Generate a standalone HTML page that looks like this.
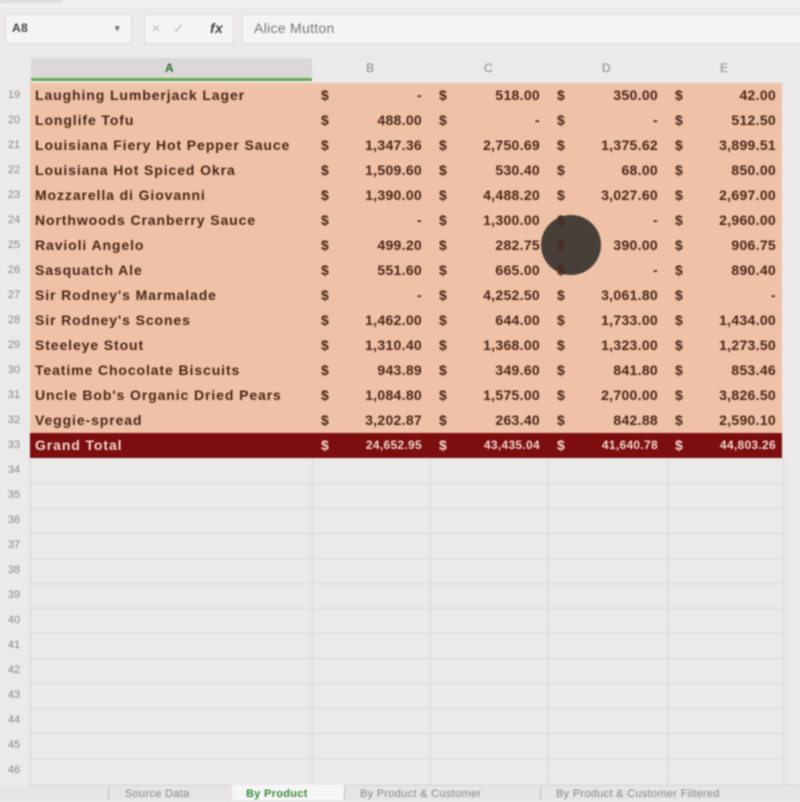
<!DOCTYPE html>
<html><head><meta charset="utf-8"><style>
body{margin:0;width:800px;height:800px;overflow:hidden;background:#ebe9ea;font-family:"Liberation Sans",sans-serif;position:relative}
.a{position:absolute}
.t{position:absolute;font-size:14px;font-weight:bold;color:#4a2616;white-space:nowrap;line-height:25px;letter-spacing:0.3px}
.w{color:#f3d8cc}
.rn{position:absolute;left:0;width:28px;text-align:center;font-size:11px;color:#8a8888;line-height:25px}
.v{text-align:right;width:100px}
#page{filter:blur(0.8px);position:absolute;inset:0}
</style></head><body><div id="page">
<div class="a" style="left:0;top:0;width:800px;height:8px;background:#f1f0f0"></div>
<div class="a" style="left:0;top:0;width:62px;height:3px;background:#dcdcdc"></div>
<div class="a" style="left:5px;top:14px;width:125px;height:28px;background:#f5f4f4;border:1px solid #dcdada"></div>
<div class="t" style="left:12px;top:15px;font-size:12px;color:#444;line-height:26px">A8</div>
<div class="t" style="left:115px;top:15px;font-size:9px;color:#666;line-height:26px">▾</div>
<div class="a" style="left:144px;top:14px;width:88px;height:28px;background:#f5f4f4;border:1px solid #dcdada"></div>
<div class="t" style="left:152px;top:15px;font-weight:normal;color:#bbb;line-height:26px">×&nbsp;&nbsp;&nbsp;✓</div>
<div class="t" style="left:210px;top:15px;font-style:italic;color:#444;line-height:26px">fx</div>
<div class="a" style="left:242px;top:14px;width:570px;height:28px;background:#f5f4f4;border:1px solid #dcdada"></div>
<div class="t" style="left:254px;top:15px;font-weight:normal;color:#777;font-size:14px;line-height:26px">Alice Mutton</div>
<div class="a" style="left:0;top:56px;width:800px;height:26px;background:#ebe9ea"></div>
<div class="a" style="left:31px;top:58px;width:281px;height:20px;background:#dad8d8"></div>
<div class="a" style="left:31px;top:78px;width:281px;height:3px;background:#6aa84f"></div>
<div class="t" style="left:165px;top:56px;color:#2f6b30;font-size:12px">A</div>
<div class="t" style="left:366px;top:56px;color:#888;font-size:12px;font-weight:normal">B</div>
<div class="t" style="left:484px;top:56px;color:#888;font-size:12px;font-weight:normal">C</div>
<div class="t" style="left:602px;top:56px;color:#888;font-size:12px;font-weight:normal">D</div>
<div class="t" style="left:720px;top:56px;color:#888;font-size:12px;font-weight:normal">E</div>
<div class="a" style="left:30px;top:83px;width:752px;height:350px;background:#efc2a7"></div>
<div class="a" style="left:30px;top:433px;width:752px;height:25px;background:#7c0e0f"></div>
<svg class="a" style="left:0;top:0" width="800" height="800">
<g stroke="#d9d7d7" stroke-width="1">
<line x1="312.5" y1="458" x2="312.5" y2="785"/><line x1="430.5" y1="458" x2="430.5" y2="785"/><line x1="548.5" y1="458" x2="548.5" y2="785"/><line x1="667.5" y1="458" x2="667.5" y2="785"/><line x1="783.5" y1="458" x2="783.5" y2="785"/>
<line x1="30" y1="483.5" x2="784" y2="483.5"/><line x1="30" y1="508.5" x2="784" y2="508.5"/><line x1="30" y1="533.5" x2="784" y2="533.5"/><line x1="30" y1="558.5" x2="784" y2="558.5"/><line x1="30" y1="583.5" x2="784" y2="583.5"/><line x1="30" y1="608.5" x2="784" y2="608.5"/><line x1="30" y1="633.5" x2="784" y2="633.5"/><line x1="30" y1="658.5" x2="784" y2="658.5"/><line x1="30" y1="683.5" x2="784" y2="683.5"/><line x1="30" y1="708.5" x2="784" y2="708.5"/><line x1="30" y1="733.5" x2="784" y2="733.5"/><line x1="30" y1="758.5" x2="784" y2="758.5"/>
<line x1="30" y1="785.5" x2="800" y2="785.5" stroke="#cfcdcd"/>
<line x1="30.5" y1="458" x2="30.5" y2="785"/>
</g>
<circle cx="571" cy="245" r="30" fill="#3b3530" opacity="0.93"/>
</svg>
<div id="rows"></div>
<div class="a" style="left:0;top:787px;width:800px;height:13px;background:#e6e4e4"></div>
<div class="a" style="left:108px;top:787px;width:1px;height:13px;background:#bbb"></div>
<div class="a" style="left:232px;top:787px;width:1px;height:13px;background:#bbb"></div>
<div class="a" style="left:232px;top:785px;width:112px;height:15px;background:#f6f6f6"></div>
<div class="a" style="left:344px;top:787px;width:1px;height:13px;background:#bbb"></div>
<div class="a" style="left:540px;top:787px;width:1px;height:13px;background:#bbb"></div>
<div class="t" style="left:125px;top:786px;font-size:11px;color:#888;font-weight:normal;line-height:16px">Source Data</div>
<div class="t" style="left:246px;top:786px;font-size:11px;color:#3a8a3a;line-height:16px">By Product</div>
<div class="t" style="left:360px;top:786px;font-size:11px;color:#888;font-weight:normal;line-height:16px">By Product & Customer</div>
<div class="t" style="left:556px;top:786px;font-size:11px;color:#888;font-weight:normal;line-height:16px">By Product & Customer Filtered</div>
</div>
<script>
var d=[
["Laughing Lumberjack Lager","-","518.00","350.00","42.00"],
["Longlife Tofu","488.00","-","-","512.50"],
["Louisiana Fiery Hot Pepper Sauce","1,347.36","2,750.69","1,375.62","3,899.51"],
["Louisiana Hot Spiced Okra","1,509.60","530.40","68.00","850.00"],
["Mozzarella di Giovanni","1,390.00","4,488.20","3,027.60","2,697.00"],
["Northwoods Cranberry Sauce","-","1,300.00","-","2,960.00"],
["Ravioli Angelo","499.20","282.75","390.00","906.75"],
["Sasquatch Ale","551.60","665.00","-","890.40"],
["Sir Rodney's Marmalade","-","4,252.50","3,061.80","-"],
["Sir Rodney's Scones","1,462.00","644.00","1,733.00","1,434.00"],
["Steeleye Stout","1,310.40","1,368.00","1,323.00","1,273.50"],
["Teatime Chocolate Biscuits","943.89","349.60","841.80","853.46"],
["Uncle Bob's Organic Dried Pears","1,084.80","1,575.00","2,700.00","3,826.50"],
["Veggie-spread","3,202.87","263.40","842.88","2,590.10"],
["Grand Total","24,652.95","43,435.04","41,640.78","44,803.26"]];
var h="",ds=[321,439,557,675],ve=[422,540,658,776];
for(var i=0;i<28;i++){var y=83+i*25;h+='<div class="rn" style="top:'+y+'px">'+(19+i)+'</div>';}
d.forEach(function(r,i){var y=83+i*25,c=i==14?' w':'';
h+='<div class="t'+c+'" style="left:35px;top:'+y+'px;letter-spacing:0.9px">'+r[0]+'</div>';
for(var k=0;k<4;k++){h+='<div class="t'+c+'" style="left:'+ds[k]+'px;top:'+y+'px">$</div>';
h+='<div class="t v'+c+'" style="left:'+(ve[k]-100)+'px;top:'+y+'px;'+(i==14?'font-size:12px':'')+'">'+r[k+1]+'</div>';}});
document.getElementById("rows").innerHTML=h;
</script>
</body></html>
